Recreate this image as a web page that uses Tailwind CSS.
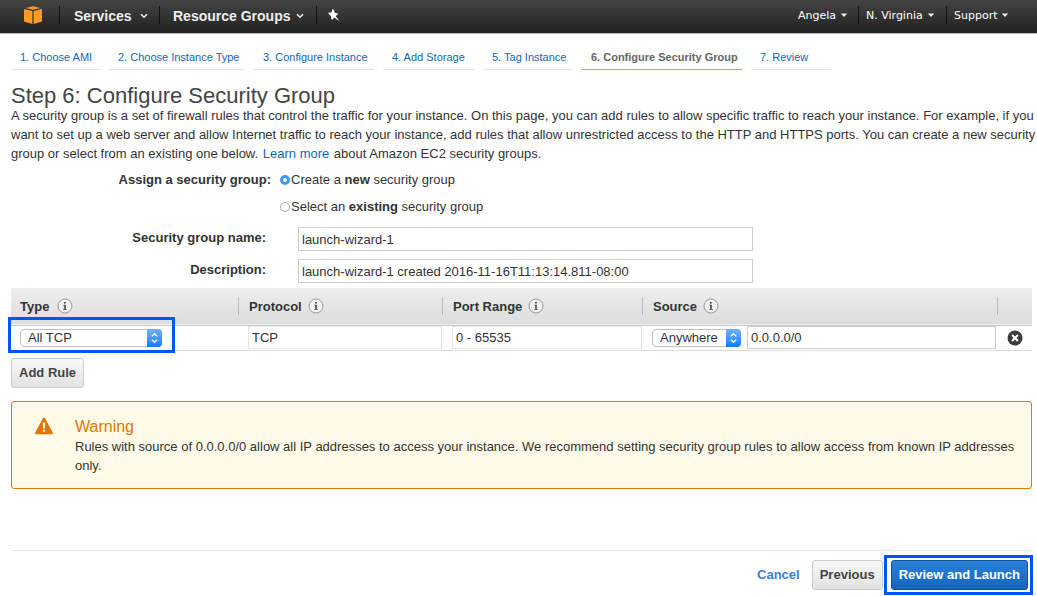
<!DOCTYPE html>
<html lang="en">
<head>
<meta charset="utf-8">
<meta name="viewport" content="width=device-width, initial-scale=1">
<title>Configure Security Group</title>
<script src="https://cdn.jsdelivr.net/npm/@tailwindcss/browser@4"></script>
</head>
<body class="bg-white font-['Liberation_Sans',Arial,sans-serif] text-[13px] leading-[19px] text-[#333]">
<svg class="hidden">
  <symbol id="info" viewBox="0 0 16 16">
    <circle cx="8" cy="8" r="7" fill="#f2f2f2" stroke="#999"/>
    <path d="M7 4h1.800v1.500H7zM6.300 6.700h2.500V11h1v.8H6.200V11h1V7.500h-.9z" fill="#444"/>
  </symbol>
  <symbol id="caret" viewBox="0 0 8 6">
    <path d="M1 1.2 4 4.2 7 1.2" fill="none" stroke="#eee" stroke-width="1.6"/>
  </symbol>
  <symbol id="caret-solid" viewBox="0 0 8 6">
    <path d="M.8 1.4h6.4L4 4.9z" fill="#eee"/>
  </symbol>
  <symbol id="stepper" viewBox="0 0 15 18">
    <path d="M4.8 7.4 7.5 4.7l2.7 2.7M4.8 10.6l2.7 2.7 2.7-2.7" fill="none" stroke="#fff" stroke-width="1.3"/>
  </symbol>
</svg>

<header class="flex h-[34px] items-center justify-between border-b border-[#b5b5b5] bg-linear-to-b from-[#444] to-[#222] pt-px pr-6 pb-1 pl-6 font-bold text-[#eee]">
  <nav class="flex h-[18px] items-center text-[14px]" aria-label="Services">
    <a href="#" aria-label="Home" class="block w-[35px]">
      <svg class="h-[18px] w-[18px]" viewBox="0 0 18 18">
        <path d="M1.500 1.900 9 .2l7.500 1.700L9 3.700z" fill="#ff9a22"/>
        <path d="M0 3 8.400 5V18L0 15.500z" fill="#ff9a22"/>
        <path d="M18 3 9.600 5V18L18 15.500z" fill="#ff9a22"/>
      </svg>
    </a>
    <button type="button" class="flex h-[18px] w-[100px] items-center gap-2 border-l border-[#111] pt-[2px] pl-[14px]">Services<svg class="h-[6px] w-2"><use href="#caret"/></svg></button>
    <button type="button" class="flex h-[18px] w-[157px] items-center gap-[6px] border-l border-[#111] pt-[2px] pl-[13px] whitespace-nowrap">Resource Groups<svg class="h-[6px] w-2"><use href="#caret"/></svg></button>
    <button type="button" aria-label="Pin" class="flex h-[18px] items-center border-l border-[#111] pl-[11px]">
      <svg class="h-3 w-3" viewBox="0 0 12 12"><path d="M4.500 0 6.500 1.500 6.300 3.500 9.500 4.500 9.800 5.500 7.700 7 8.300 8 11.500 12 6.800 9 5.800 8.700 4.700 10.800 3.200 10 3 7 .5 5V3.500H3.500z" fill="#fff"/></svg>
    </button>
  </nav>
  <nav class="flex h-[18px] items-center font-['DejaVu_Sans',sans-serif] text-[11px] font-normal text-white" aria-label="Account">
    <button type="button" class="flex h-[18px] w-[60px] items-center gap-1">Angela<svg class="h-[6px] w-2"><use href="#caret-solid"/></svg></button>
    <button type="button" class="flex h-[18px] w-[88px] items-center gap-1 border-l border-[#111] pl-[7px] whitespace-nowrap">N. Virginia<svg class="h-[6px] w-2"><use href="#caret-solid"/></svg></button>
    <button type="button" class="flex h-[18px] w-[67px] items-center gap-1 border-l border-[#111] pl-[7px]">Support<svg class="h-[6px] w-2"><use href="#caret-solid"/></svg></button>
  </nav>
</header>

<main class="pt-3 pr-[5px] pb-[6px] pl-[11px]">
  <nav class="flex gap-[9px] text-[11px] leading-[23px] whitespace-nowrap text-[#1166bb]" aria-label="Steps">
    <a href="#" class="w-[89px] border-b border-[#e4e4e4] pl-[9px]">1. Choose AMI</a>
    <a href="#" class="w-[136px] border-b border-[#e4e4e4] pl-[9px]">2. Choose Instance Type</a>
    <a href="#" class="w-[120px] border-b border-[#e4e4e4] pl-[9px]">3. Configure Instance</a>
    <a href="#" class="w-[91px] border-b border-[#e4e4e4] pl-[9px]">4. Add Storage</a>
    <a href="#" class="w-[90px] border-b border-[#e4e4e4] pl-[9px]">5. Tag Instance</a>
    <a href="#" aria-current="step" class="w-[160px] border-b border-[#f0a020] pl-[9px] font-bold text-[#666]">6. Configure Security Group</a>
    <a href="#" class="w-[80px] border-b border-[#e4e4e4] pl-[9px]">7. Review</a>
  </nav>

  <h1 class="mt-[15px] text-[22px] leading-[21px] text-[#444]">Step 6: Configure Security Group</h1>
  <p class="-mr-[5px]">A security group is a set of firewall rules that control the traffic for your instance. On this page, you can add rules to allow specific traffic to reach your instance. For example, if you want to set up a web server and allow Internet traffic to reach your instance, add rules that allow unrestricted access to the HTTP and HTTPS ports. You can create a new security group or select from an existing one below. <a href="#" class="mx-px text-[#1166bb]">Learn more</a> about Amazon EC2 security groups.</p>

  <form>
    <fieldset class="mt-[7px] flex">
      <div class="w-[260px] text-right font-bold" id="assign">Assign a security group:</div>
      <div class="ml-[9px] flex flex-col gap-2" role="radiogroup" aria-labelledby="assign">
        <label class="flex items-center gap-px"><input type="radio" name="sg" checked class="h-[10px] w-[10px] appearance-none rounded-full border border-[#aaa] bg-white checked:border-[3px] checked:border-[#3b99fc]"><span>Create a <b>new</b> security group</span></label>
        <label class="flex items-center gap-px"><input type="radio" name="sg" class="h-[10px] w-[10px] appearance-none rounded-full border border-[#aaa] bg-white checked:border-[3px] checked:border-[#3b99fc]"><span>Select an <b>existing</b> security group</span></label>
      </div>
    </fieldset>
    <div class="mt-[11px] flex">
      <label for="name" class="mt-px w-[255px] text-right font-bold">Security group name:</label>
      <input id="name" type="text" value="launch-wizard-1" class="ml-8 h-6 w-[455px] border border-[#ccc] px-[3px]">
    </div>
    <div class="mt-2 flex">
      <label for="desc" class="mt-px w-[255px] text-right font-bold">Description:</label>
      <input id="desc" type="text" value="launch-wizard-1 created 2016-11-16T11:13:14.811-08:00" class="ml-8 h-6 w-[455px] border border-[#ccc] px-[3px]">
    </div>

    <table class="mt-[5px] w-full table-fixed border-collapse text-left">
      <colgroup><col class="w-[228px]"><col class="w-[204px]"><col class="w-[200px]"><col><col class="w-[34px]"></colgroup>
      <thead>
        <tr class="h-[37px] border-b border-[#ccc] bg-linear-to-b from-[#eee] to-[#ddd]">
          <th class="p-0"><div class="flex h-[18px] items-center gap-2 border-r border-[#bbb] pl-[9px]">Type<svg class="h-4 w-4"><use href="#info"/></svg></div></th>
          <th class="p-0"><div class="flex h-[18px] items-center gap-[6px] border-r border-[#bbb] pl-[10px]">Protocol<svg class="h-4 w-4"><use href="#info"/></svg></div></th>
          <th class="p-0"><div class="flex h-[18px] items-center gap-[6px] border-r border-[#bbb] pl-[10px]">Port Range<svg class="h-4 w-4"><use href="#info"/></svg></div></th>
          <th class="p-0"><div class="flex h-[18px] items-center gap-[6px] border-r border-[#bbb] pl-[10px]">Source<svg class="h-4 w-4"><use href="#info"/></svg></div></th>
          <th class="p-0"></th>
        </tr>
      </thead>
      <tbody>
        <tr class="h-[25px] border-b border-[#ddd]">
          <td class="p-0">
            <div class="relative ml-[9px] h-[18px] w-[142px]">
              <select aria-label="Type" class="block h-[18px] w-full appearance-none rounded-[4px] border border-[#c0c0c0] bg-white pl-[7px] leading-4"><option>All TCP</option></select>
              <svg class="pointer-events-none absolute top-0 right-0 h-[18px] w-[15px] rounded-r-[4px] bg-linear-to-b from-[#6cb3fa] to-[#0a7aff]"><use href="#stepper"/></svg>
              <div class="pointer-events-none absolute -top-[12px] -right-[13px] -bottom-[6px] -left-[12px] border-3 border-[#0055ff]"></div>
            </div>
          </td>
          <td class="p-0 pr-px pl-[9px]"><input aria-label="Protocol" type="text" readonly value="TCP" class="block h-[23px] w-full border border-[#e4e4e4] px-[3px]"></td>
          <td class="p-0 pr-px pl-[9px]"><input aria-label="Port range" type="text" readonly value="0 - 65535" class="block h-[23px] w-full border border-[#e4e4e4] px-[3px]"></td>
          <td class="p-0 pr-[2px] pl-[9px]">
            <div class="flex items-center gap-[6px]">
              <div class="relative h-[18px] w-[89px] shrink-0">
                <select aria-label="Source" class="block h-[18px] w-full appearance-none rounded-[4px] border border-[#c0c0c0] bg-white pl-[7px] leading-4"><option>Anywhere</option></select>
                <svg class="pointer-events-none absolute top-0 right-0 h-[18px] w-[15px] rounded-r-[4px] bg-linear-to-b from-[#6cb3fa] to-[#0a7aff]"><use href="#stepper"/></svg>
              </div>
              <input aria-label="Source address" type="text" value="0.0.0.0/0" class="block h-[23px] w-full min-w-0 border border-[#ccc] px-[3px]">
            </div>
          </td>
          <td class="p-0 pt-px pl-[9px]"><button type="button" aria-label="Remove rule" class="block"><svg class="h-4 w-4" viewBox="0 0 16 16"><circle cx="8" cy="8" r="7.500" fill="#3c3c3c"/><path d="m5 5 6 6m0-6-6 6" stroke="#fff" stroke-width="2"/></svg></button></td>
        </tr>
      </tbody>
    </table>
    <button type="button" class="mt-[7px] block h-[30px] rounded-[3px] border border-[#ccc] bg-linear-to-b from-[#f8f8f8] to-[#e2e2e2] px-[7px] font-bold text-[#444]">Add Rule</button>
  </form>

  <section class="mt-[13px] flex rounded-[3px] border border-[#e07b00] bg-[#fffbe8] pt-[14px] pr-3 pb-[13px] pl-[23px]">
    <svg class="mt-px h-[18px] w-[18px] shrink-0" viewBox="0 0 18 18"><path d="M9 .6c.6 0 .9.300 1.200.8l7.500 14c.5 1 .1 1.800-.9 1.800H1.200c-1 0-1.400-.8-.9-1.800l7.500-14C8.100.9 8.400.6 9 .6z" fill="#e07700"/><path d="M7.800 5.500h2.400l-.3 6H8.100zM7.900 12.700h2.200v2.200H7.900z" fill="#fffbe8"/></svg>
    <div class="ml-[22px]">
      <h2 class="text-[16px] leading-[21px] text-[#e07700]">Warning</h2>
      <p>Rules with source of 0.0.0.0/0 allow all IP addresses to access your instance. We recommend setting security group rules to allow access from known IP addresses only.</p>
    </div>
  </section>

  <footer class="mt-[61px] flex items-center justify-end border-t border-[#e8e8e8] pt-[9px] pr-1 font-bold">
    <a href="#" class="mr-3 text-[#3a7de0]">Cancel</a>
    <button type="button" class="mr-2 h-[30px] rounded-[3px] border border-[#ccc] bg-linear-to-b from-[#f8f8f8] to-[#e2e2e2] px-[7px] text-[#444]">Previous</button>
    <div class="relative">
      <button type="button" class="block h-[30px] rounded-[3px] border border-[#125093] bg-linear-to-b from-[#2b7fd8] to-[#1565bd] px-[7px] text-white">Review and Launch</button>
      <div class="pointer-events-none absolute -top-[5px] -right-[5px] -bottom-[5px] -left-[7px] border-3 border-[#0055ff]"></div>
    </div>
  </footer>
</main>
</body>
</html>
